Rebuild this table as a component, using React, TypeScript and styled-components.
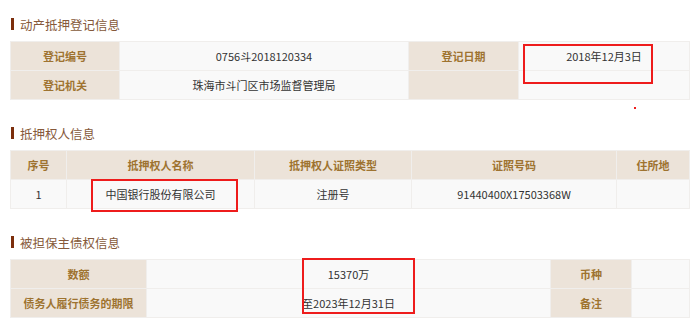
import * as React from 'react'
import styled, { createGlobalStyle } from 'styled-components'

const GlobalStyle = createGlobalStyle`
    body {
        margin: 0;
        background: #ffffff;
        font-family: "Noto Sans CJK SC", "Noto Sans", sans-serif;
    }
`

const Page = styled.div`
    position: relative;
    width: 691px;
    height: 321px;
    padding: 14px 2px 0 10px;
    box-sizing: border-box;
    overflow: hidden;
`

const Section = styled.section`
    margin-bottom: 23px;
`

const Title = styled.div`
    display: flex;
    align-items: center;
    height: 20px;
    margin-bottom: 7px;
    padding-left: 1px;
    font-size: 12.5px;
    color: #86593a;
    &::before {
        content: '';
        width: 3px;
        height: 12px;
        margin-right: 6px;
        background: #7c2e0c;
    }
`

const Table = styled.table`
    width: 679px;
    border-collapse: collapse;
    table-layout: fixed;
    font-size: 11px;
`

const Cell = styled.td<{ $head?: boolean }>`
    height: 28px;
    padding: 0 4px;
    text-align: center;
    border: 1px solid #f0eeec;
    background: ${p => (p.$head ? '#ece3d9' : '#f9f9f9')};
    color: ${p => (p.$head ? '#9e7330' : '#333333')};
    font-weight: ${p => (p.$head ? 700 : 400)};
    white-space: nowrap;
`

const Mark = styled.div<{ $x: number; $y: number; $w: number; $h: number }>`
    position: absolute;
    left: ${p => p.$x}px;
    top: ${p => p.$y}px;
    width: ${p => p.$w}px;
    height: ${p => p.$h}px;
    border: 2px solid #ee1c1c;
    box-sizing: border-box;
`

const Dot = styled.div`
    position: absolute;
    left: 634px;
    top: 107px;
    width: 2px;
    height: 2px;
    background: #ee1c1c;
`

export default function App() {
    return (
        <Page>
            <GlobalStyle />
            <Section>
                <Title>动产抵押登记信息</Title>
                <Table>
                    <colgroup>
                        <col style={{ width: 109 }} />
                        <col style={{ width: 289 }} />
                        <col style={{ width: 110 }} />
                        <col style={{ width: 171 }} />
                    </colgroup>
                    <tbody>
                        <tr>
                            <Cell $head>登记编号</Cell>
                            <Cell>0756斗2018120334</Cell>
                            <Cell $head>登记日期</Cell>
                            <Cell>2018年12月3日</Cell>
                        </tr>
                        <tr>
                            <Cell $head>登记机关</Cell>
                            <Cell>珠海市斗门区市场监督管理局</Cell>
                            <Cell $head></Cell>
                            <Cell></Cell>
                        </tr>
                    </tbody>
                </Table>
            </Section>
            <Section>
                <Title>抵押权人信息</Title>
                <Table>
                    <colgroup>
                        <col style={{ width: 56 }} />
                        <col style={{ width: 188 }} />
                        <col style={{ width: 157 }} />
                        <col style={{ width: 205 }} />
                        <col style={{ width: 73 }} />
                    </colgroup>
                    <tbody>
                        <tr>
                            <Cell $head>序号</Cell>
                            <Cell $head>抵押权人名称</Cell>
                            <Cell $head>抵押权人证照类型</Cell>
                            <Cell $head>证照号码</Cell>
                            <Cell $head>住所地</Cell>
                        </tr>
                        <tr>
                            <Cell>1</Cell>
                            <Cell>中国银行股份有限公司</Cell>
                            <Cell>注册号</Cell>
                            <Cell>91440400X17503368W</Cell>
                            <Cell></Cell>
                        </tr>
                    </tbody>
                </Table>
            </Section>
            <Section>
                <Title>被担保主债权信息</Title>
                <Table>
                    <colgroup>
                        <col style={{ width: 136 }} />
                        <col style={{ width: 404 }} />
                        <col style={{ width: 81 }} />
                        <col style={{ width: 58 }} />
                    </colgroup>
                    <tbody>
                        <tr>
                            <Cell $head>数额</Cell>
                            <Cell>15370万</Cell>
                            <Cell $head>币种</Cell>
                            <Cell></Cell>
                        </tr>
                        <tr>
                            <Cell $head>债务人履行债务的期限</Cell>
                            <Cell>至2023年12月31日</Cell>
                            <Cell $head>备注</Cell>
                            <Cell></Cell>
                        </tr>
                    </tbody>
                </Table>
            </Section>
            <Mark $x={523} $y={44} $w={130} $h={40} />
            <Mark $x={91} $y={179} $w={147} $h={33} />
            <Mark $x={302} $y={258} $w={113} $h={56} />
            <Dot />
        </Page>
    )
}
